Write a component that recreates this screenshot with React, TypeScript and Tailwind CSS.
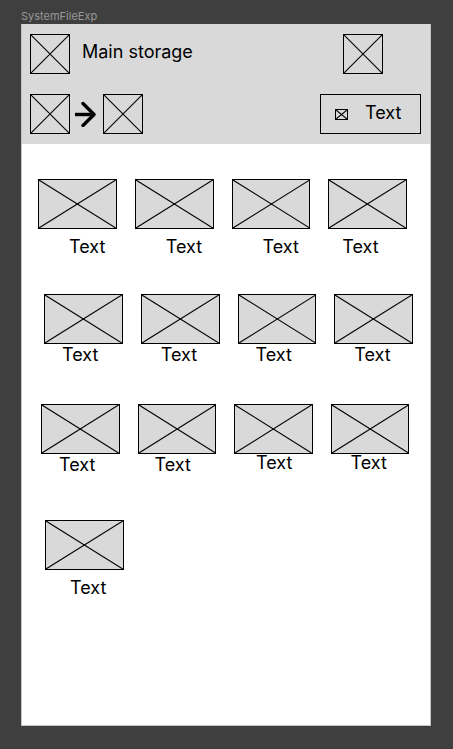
import React from "react";

type Item = { name: string; inset: string };
type Row = { id: string; className: string; items: Item[] };

const near = "leading-[22px]";
const tight = "leading-[18px]";
const spaced = "pt-2 leading-5";

const rows: Row[] = [
  {
    id: "row-1",
    className: "mt-[35px] pl-4 pr-[23px]",
    items: [
      { name: "Text", inset: `pl-[31px] ${spaced}` },
      { name: "Text", inset: `pl-[31px] ${spaced}` },
      { name: "Text", inset: `pl-[31px] ${spaced}` },
      { name: "Text", inset: `pl-[14px] ${spaced}` },
    ],
  },
  {
    id: "row-2",
    className: "mt-[37px] pl-[22px] pr-[17px]",
    items: [
      { name: "Text", inset: `pl-[18px] ${near}` },
      { name: "Text", inset: `pl-5 ${near}` },
      { name: "Text", inset: `pl-[18px] ${near}` },
      { name: "Text", inset: `pl-5 ${near}` },
    ],
  },
  {
    id: "row-3",
    className: "mt-[38px] pl-[19px] pr-[21px]",
    items: [
      { name: "Text", inset: `pl-[18px] ${near}` },
      { name: "Text", inset: `pl-[17px] ${near}` },
      { name: "Text", inset: `pl-[22px] ${tight}` },
      { name: "Text", inset: `pl-5 ${tight}` },
    ],
  },
  {
    id: "row-4",
    className: "mt-11 pl-[23px] pr-4",
    items: [{ name: "Text", inset: `pl-[25px] ${spaced}` }],
  },
];

function Placeholder({ className }: { className: string }) {
  return (
    <span className={`block shrink-0 border border-black ${className}`}>
      <svg className="block h-full w-full" stroke="black" strokeWidth="1.1" aria-hidden="true">
        <line x1="0" y1="0" x2="100%" y2="100%" />
        <line x1="0" y1="100%" x2="100%" y2="0" />
      </svg>
    </span>
  );
}

function FileTile({ item }: { item: Item }) {
  return (
    <button type="button" className="block w-full text-left">
      <Placeholder className="h-[50px] w-full bg-[#d9d9d9]" />
      <span className={`block ${item.inset}`}>{item.name}</span>
    </button>
  );
}

export default function App() {
  return (
    <div className="flex min-h-screen flex-col bg-[#3f3f3f] px-[22px] pb-[23px] pl-[21px] font-['Inter',sans-serif] text-lg text-black">
      <p className="pt-2 text-[11px] leading-4 text-[#989898]">SystemFileExp</p>
      <main className="flex-1 border-r border-b border-l border-[#c4c4c4] bg-white">
        <header className="flex flex-col gap-5 bg-[#d9d9d9] pt-[10px] pr-[9px] pb-[10px] pl-[8px]">
          <div className="flex items-center">
            <button type="button" aria-label="Menu">
              <Placeholder className="size-10" />
            </button>
            <h1 className="ml-3 flex-1 pb-1 leading-6">Main storage</h1>
            <button type="button" aria-label="Options" className="mr-[38px]">
              <Placeholder className="size-10" />
            </button>
          </div>
          <div className="flex items-center">
            <button type="button" aria-label="Source folder">
              <Placeholder className="size-10" />
            </button>
            <svg className="mx-1 h-[26px] w-[25px]" viewBox="0 0 25 26" fill="none" stroke="black" strokeWidth="3.4" aria-hidden="true">
              <path d="M1 13.5H21" />
              <path d="M9 2.5L20 13.5L9 24.5" strokeLinecap="round" strokeLinejoin="round" />
            </svg>
            <button type="button" aria-label="Target folder">
              <Placeholder className="size-10" />
            </button>
            <button type="button" className="ml-auto flex h-10 w-[101px] items-center border border-black pl-[14px]">
              <Placeholder className="h-[11px] w-[13px]" />
              <span className="ml-[17px] pb-0.5 leading-6">Text</span>
            </button>
          </div>
        </header>
        {rows.map((row) => (
          <div key={row.id} className={`grid grid-cols-4 items-start gap-[18px] ${row.className}`}>
            {row.items.map((item, index) => (
              <FileTile key={index} item={item} />
            ))}
          </div>
        ))}
      </main>
    </div>
  );
}
